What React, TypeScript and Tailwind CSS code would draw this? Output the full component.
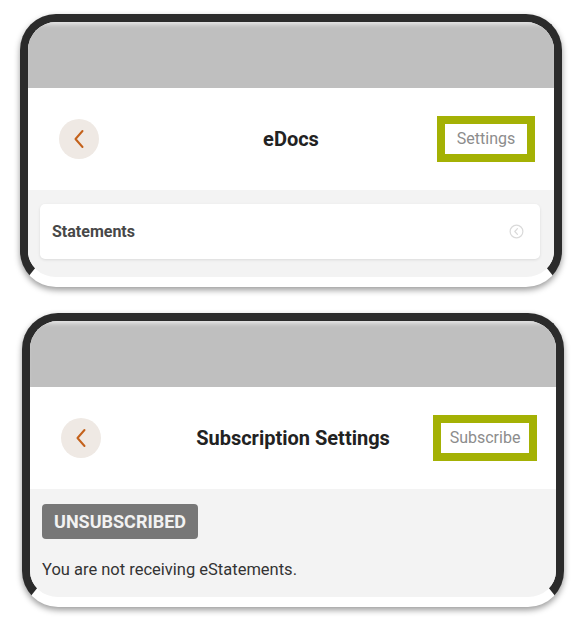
import type { ReactNode } from 'react';

/** Phone-style framed crop: dark bezel on top and sides, white lip underneath */
function Frame({ className, children }: { className: string; children: ReactNode }) {
  return (
    <div
      className={`w-[542px] overflow-hidden rounded-[36px] border-[8px] border-b-[10px] border-[#2b2b2b] border-b-white bg-white shadow-[0_3px_6px_rgba(0,0,0,0.4)] ${className}`}
    >
      {children}
    </div>
  );
}

function BackButton() {
  return (
    <div className="flex h-[40px] w-[40px] items-center justify-center rounded-full bg-[#efe9e4]">
      <svg width="12" height="20" viewBox="0 0 12 20" fill="none">
        <path d="M9.5 2 L2.5 10 L9.5 18" stroke="#c4621c" strokeWidth="2" strokeLinecap="round" strokeLinejoin="round" />
      </svg>
    </div>
  );
}

function Header({ title, action, actionWidth }: { title: string; action: string; actionWidth: string }) {
  return (
    <>
      <div className="h-[66px] bg-[#bfbfbf] shadow-[inset_0_5px_5px_-3px_rgba(255,255,255,0.7)]" />
      <div className="grid h-[102px] grid-cols-[1fr_auto_1fr] items-center bg-white">
        <div className="pl-[31px]">
          <BackButton />
        </div>
        <h1 className="text-[20px] font-bold text-[#222]">{title}</h1>
        <div className="flex justify-end pr-[19px]">
          {/* highlighted action button */}
          <div
            className={`flex h-[46px] ${actionWidth} items-center justify-center border-[8px] border-[#a4b104] bg-white text-[16px] text-[#8c8c8c]`}
          >
            {action}
          </div>
        </div>
      </div>
    </>
  );
}

export default function App() {
  return (
    <div className="min-h-[624px] w-[580px] bg-white pt-[14px] font-['Roboto',sans-serif]">
      <Frame className="ml-[20px]">
        <Header title="eDocs" action="Settings" actionWidth="w-[98px]" />
        <div className="h-[87px] bg-[#f3f3f3] pl-[12px] pr-[14px] pt-[14px]">
          <div className="flex h-[55px] items-center justify-between rounded-[5px] bg-white pl-[12px] pr-[16px] shadow-[0_1px_3px_rgba(0,0,0,0.1)]">
            <span className="text-[16px] font-bold text-[#484848]">Statements</span>
            <svg width="15" height="15" viewBox="0 0 16 16" fill="none">
              <circle cx="8" cy="8" r="6.8" stroke="#dadada" strokeWidth="1.3" />
              <path d="M9 5 L6.2 8 L9 11" stroke="#dadada" strokeWidth="1.3" strokeLinecap="round" strokeLinejoin="round" />
            </svg>
          </div>
        </div>
      </Frame>

      <Frame className="ml-[22px] mt-[26px]">
        <Header title="Subscription Settings" action="Subscribe" actionWidth="w-[104px]" />
        <div className="h-[108px] bg-[#f3f3f3] px-[12px] pt-[15px]">
          <div className="inline-flex h-[35px] w-[156px] items-center justify-center rounded-[4px] bg-[#777] text-[18px] font-bold text-[#f2f2f2]">
            UNSUBSCRIBED
          </div>
          <p className="mt-[21px] text-[16.5px] leading-[20px] text-[#333]">You are not receiving eStatements.</p>
        </div>
      </Frame>
    </div>
  );
}
